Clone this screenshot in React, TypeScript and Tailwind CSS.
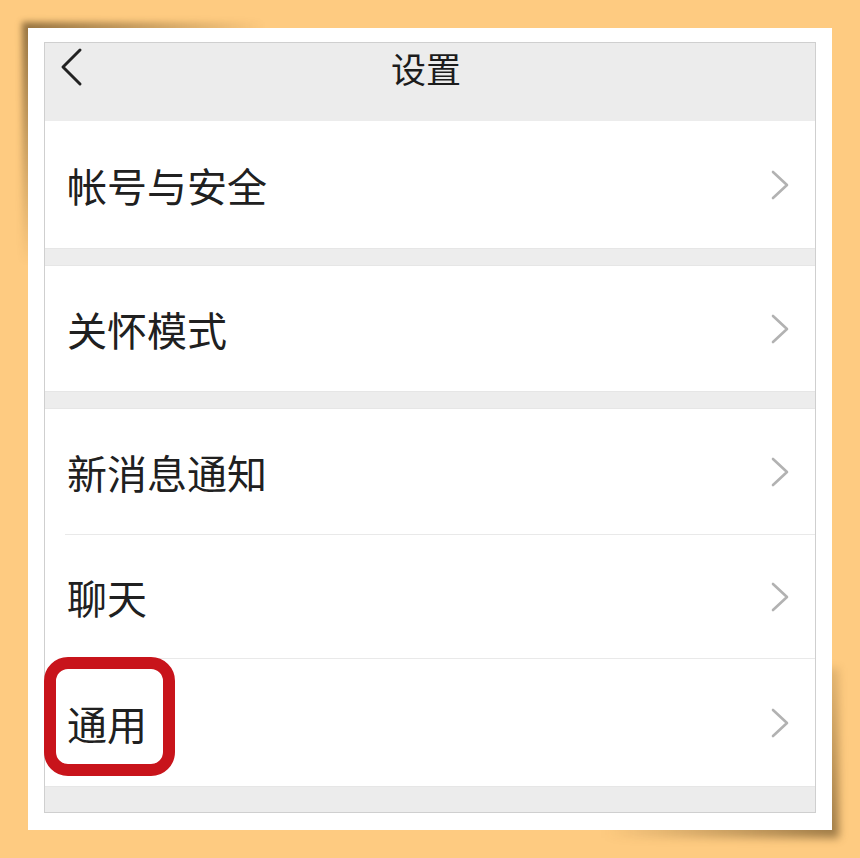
import React from 'react';

const font = { fontFamily: '"Noto Sans CJK SC", "Noto Sans", sans-serif' };

const Chevron: React.FC = () => (
  <svg width="22" height="34" viewBox="0 0 22 34" className="shrink-0">
    <polyline points="4,4 18,17 4,30" fill="none" stroke="#b2b2b2" strokeWidth="2.6" strokeLinecap="round" strokeLinejoin="round" />
  </svg>
);

interface RowProps {
  label: string;
  h: string;
  children?: React.ReactNode;
}

const Row: React.FC<RowProps> = ({ label, h, children }) => (
  <div className={`relative flex items-center justify-between bg-white pl-[22px] pr-[24px] ${h}`}>
    <span className="text-[40px] leading-none text-[#202020]">{label}</span>
    <Chevron />
    {children}
  </div>
);

const Gap: React.FC<{ h: string }> = ({ h }) => (
  <div className={`bg-[#ededed] border-y border-[#e6e6e6] ${h}`} />
);

export default function App() {
  return (
    <div className="w-[860px] h-[858px] bg-[#fecb81] pl-[28px] pt-[28px]" style={font}>
      <div className="relative w-[804px] h-[802px]">
        {/* lifted corner shadows */}
        <div className="absolute -left-[6px] -top-[6px] w-[240px] h-[240px] blur-[3px] bg-[radial-gradient(circle_at_top_left,rgba(60,40,10,0.55),transparent_72%)]" />
        <div className="absolute -right-[7px] -bottom-[8px] w-[280px] h-[170px] blur-[4px] bg-[radial-gradient(circle_at_bottom_right,rgba(60,40,10,0.5),transparent_72%)]" />

        <div className="relative z-10 w-full h-full bg-white pl-[16px] pr-[16px] pt-[14px]">
          <div className="flex flex-col border border-[#cfcfcf] bg-white">
            {/* header */}
            <div className="relative flex h-[78px] items-start justify-center bg-[#ececec] pt-[5px]">
              <svg width="26" height="42" viewBox="0 0 26 42" className="absolute left-[13px] top-[3px]">
                <polyline points="22,4 5,21 22,38" fill="none" stroke="#222" strokeWidth="3" strokeLinecap="round" strokeLinejoin="round" />
              </svg>
              <span className="text-[35px] leading-[40px] text-[#1c1c1c] -ml-[8px]">设置</span>
            </div>

            <Row label="帐号与安全" h="h-[127px]" />
            <Gap h="h-[18px]" />
            <Row label="关怀模式" h="h-[125px]" />
            <Gap h="h-[18px]" />
            <Row label="新消息通知" h="h-[125px]" />
            <div className="flex bg-white">
              <div className="w-[20px]" />
              <div className="flex-1 h-px bg-[#e9e9e9]" />
            </div>
            <Row label="聊天" h="h-[123px]" />
            <div className="flex bg-white">
              <div className="w-[20px]" />
              <div className="flex-1 h-px bg-[#e9e9e9]" />
            </div>
            <Row label="通用" h="h-[127px]">
              <div className="absolute -left-px -top-[2px] w-[131px] h-[119px] rounded-[24px] border-[12px] border-[#c8141b]" />
            </Row>
            <div className="h-[26px] bg-[#ececec] border-t border-[#e6e6e6]" />
          </div>
        </div>
      </div>
    </div>
  );
}
